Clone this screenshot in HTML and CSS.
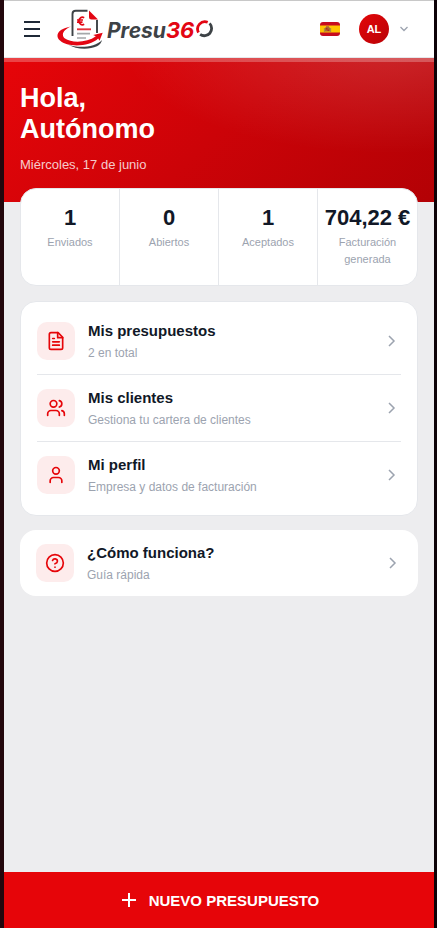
FILE: index.html
```html
<!DOCTYPE html>
<html lang="es">
<head>
  <meta charset="utf-8">
  <meta name="viewport" content="width=device-width, initial-scale=1">
  <title>Presu360</title>
  <link rel="stylesheet" href="styles.css">
</head>
<body>
  <div class="app">
    <header class="topbar">
      <button class="icon-button menu-button" type="button" aria-label="Menú">
        <svg width="18" height="18" viewBox="0 0 18 18" fill="none" stroke="currentColor" stroke-width="2"><path d="M1 2h16M1 9h16M1 16h16"/></svg>
      </button>
      <a class="logo" href="#" aria-label="Presu360">
        <svg class="logo-mark" width="48" height="42" viewBox="56 8 48 42" fill="none">
          <path d="M72.500 36V14q0-3.200 3.200-3.200H87.500M97 20v13" stroke="#3d4246" stroke-width="1.900"/>
          <path d="M89 10.500V17q0 2.500 2.500 2.500H98z" fill="#e30613"/>
          <path d="M84.200 17.700c-2.500-1.300-5.300.2-5.300 3.300s2.800 4.600 5.300 3.300M77 20h6M77 22.200h5.500" stroke="#e30613" stroke-width="1.700"/>
          <path d="M77 29.300h14" stroke="#e3333c" stroke-width="1.900"/>
          <path d="M77 33.600h13M77 38h9" stroke="#a5a7a9" stroke-width="1.600"/>
          <path d="M68 44.500c9 3.800 27 3.300 34-4.500-.5 2.500-2 5-5 6.200C89 50 76 49.500 68 44.500z" fill="#3d4246"/>
          <path d="M71 26.500C59 28.500 54 35 60 40.500c7.500 7 29 6.700 38.200-2l1.300 2.200 3.200-8-9.500 2.300 2.600 1.300C87 43 71 43 65 38.500c-4.500-3.500-1.500-9 6-12z" fill="#e30613"/>
        </svg>
        <span class="logo-text">Presu<span class="logo-red">36</span></span>
        <svg class="logo-zero" width="18" height="18" viewBox="0 0 18 18" fill="none" stroke-width="2.800">
          <path d="M2.500 12.500A7.300 7.300 0 0 1 11.700 2.300" stroke="#e30613"/>
          <path d="M13.600 3.400A7.300 7.300 0 0 1 4.100 14.400" stroke="#3d4246"/>
        </svg>
      </a>
      <div class="account">
        <button class="icon-button" type="button" aria-label="Español">
          <svg class="flag" width="20" height="14" viewBox="0 0 20 14">
            <path fill="#c60b1e" d="M0 0h20v14H0z"/>
            <path fill="#ffc400" d="M0 3.500h20v7H0z"/>
            <path fill="#a96b32" d="M5 5.500h5V9.500H5zM6 4.300h3v1.200H6z"/>
            <path fill="#b32a20" d="M6 6h1.500v1.500H6zM7.500 7.500H9V9H7.500z"/>
            <path fill="#8f7a52" d="M3.900 6h.8v4h-.8zM10.300 6h.8v4h-.8z"/>
          </svg>
        </button>
        <button class="icon-button user-button" type="button" aria-label="Cuenta de AL">
          <span class="avatar">AL</span>
          <svg width="10" height="6" viewBox="0 0 10 6" fill="none" stroke="#9ca3af" stroke-width="1.300"><path d="M1.500 1 5 4.500 8.500 1"/></svg>
        </button>
      </div>
    </header>

    <main class="content">
      <section class="hero">
        <h1>Hola,<br>Autónomo</h1>
        <p>Miércoles, 17 de junio</p>
      </section>

      <dl class="stats">
        <div class="stat"><dd>1</dd><dt>Enviados</dt></div>
        <div class="stat"><dd>0</dd><dt>Abiertos</dt></div>
        <div class="stat"><dd>1</dd><dt>Aceptados</dt></div>
        <div class="stat"><dd>704,22 €</dd><dt>Facturación generada</dt></div>
      </dl>

      <nav class="card menu">
        <a class="row" href="#">
          <span class="tile"><svg class="icon" viewBox="0 0 24 24"><path d="M14.500 2H6a2 2 0 0 0-2 2v16a2 2 0 0 0 2 2h12a2 2 0 0 0 2-2V7.500z"/><path d="M14 2v6h6M16 13H8M16 17H8M10 9H8"/></svg></span>
          <span class="row-text"><strong>Mis presupuestos</strong><small>2 en total</small></span>
          <svg class="chevron" viewBox="0 0 18 18"><path d="m6 4 5 5-5 5"/></svg>
        </a>
        <a class="row" href="#">
          <span class="tile"><svg class="icon" viewBox="0 0 24 24"><path d="M16 21v-2a4 4 0 0 0-4-4H6a4 4 0 0 0-4 4v2"/><circle cx="9" cy="7" r="4"/><path d="M22 21v-2a4 4 0 0 0-3-3.870M16 3.130a4 4 0 0 1 0 7.750"/></svg></span>
          <span class="row-text"><strong>Mis clientes</strong><small>Gestiona tu cartera de clientes</small></span>
          <svg class="chevron" viewBox="0 0 18 18"><path d="m6 4 5 5-5 5"/></svg>
        </a>
        <a class="row" href="#">
          <span class="tile"><svg class="icon" viewBox="0 0 24 24"><path d="M19 21v-2a4 4 0 0 0-4-4H9a4 4 0 0 0-4 4v2"/><circle cx="12" cy="7" r="4"/></svg></span>
          <span class="row-text"><strong>Mi perfil</strong><small>Empresa y datos de facturación</small></span>
          <svg class="chevron" viewBox="0 0 18 18"><path d="m6 4 5 5-5 5"/></svg>
        </a>
      </nav>

      <a class="card help" href="#">
        <span class="tile"><svg class="icon" viewBox="0 0 24 24"><circle cx="12" cy="12" r="10"/><path d="M9.090 9a3 3 0 0 1 5.830 1c0 2-3 3-3 3M12 17h.01"/></svg></span>
        <span class="row-text"><strong>¿Cómo funciona?</strong><small>Guía rápida</small></span>
        <svg class="chevron" viewBox="0 0 18 18"><path d="m6 4 5 5-5 5"/></svg>
      </a>
    </main>

    <button class="new-budget" type="button">
      <svg width="20" height="20" viewBox="0 0 20 20" fill="none" stroke="currentColor" stroke-width="2"><path d="M10 3v14M3 10h14"/></svg>
      NUEVO PRESUPUESTO
    </button>
  </div>
</body>
</html>
```

FILE: styles.css
```css
* {
  box-sizing: border-box;
}

body {
  margin: 0;
  background: linear-gradient(90deg, #23070d, #0d0207);
  color: #111827;
  font-family: "Liberation Sans", Arial, sans-serif;
}

h1,
p,
dl,
dd {
  margin: 0;
}

a {
  color: inherit;
  text-decoration: none;
}

button {
  font: inherit;
  border: 0;
  cursor: pointer;
}

.app {
  display: flex;
  flex-direction: column;
  min-height: 100vh;
  margin: 0 3px 0 4px;
  border-top: 1px solid #c8c8c8;
  background: #ededef;
}

.topbar {
  display: flex;
  align-items: center;
  height: 57px;
  padding: 0 25px 0 19px;
  border-bottom: 1px solid #e5e7eb;
  background: #fff;
}

.icon-button {
  display: flex;
  align-items: center;
  padding: 0;
  background: none;
}

.menu-button {
  color: #1f2937;
}

.logo {
  display: flex;
  align-items: center;
  margin-left: 15px;
}

.logo-text {
  margin: 0 2px 0 3px;
  padding-top: 2px;
  color: #3d4246;
  font: italic 700 21px/28px Inter, sans-serif;
}

.logo-red {
  color: #e30613;
  font-size: 22px;
}

.account {
  display: flex;
  align-items: center;
  gap: 19px;
  margin-left: auto;
}

.flag {
  border-radius: 3px;
}

.user-button {
  gap: 10px;
}

.avatar {
  display: grid;
  place-items: center;
  width: 30px;
  height: 30px;
  border-radius: 50%;
  background: linear-gradient(135deg, #e30609, #b90206);
  color: #fff;
  font-size: 11px;
  font-weight: 700;
}

.content {
  flex: 1;
}

.hero {
  padding: 21px 16px 27px;
  border-top: 4px solid rgba(255, 255, 255, 0.25);
  background:
    radial-gradient(ellipse 270px 110px at 90% -10%, rgba(255, 255, 255, 0.15), transparent) border-box,
    linear-gradient(135deg, #e60509, #cc0308 50%, #b30105) border-box;
  color: #fff;
}

.hero h1 {
  font-size: 27px;
  line-height: 31px;
}

.hero p {
  margin-top: 10px;
  color: rgba(255, 255, 255, 0.8);
  font-size: 13px;
  line-height: 20px;
}

.stats {
  display: grid;
  grid-template-columns: repeat(4, 1fr);
  position: relative;
  margin: -14px 16px 15px;
  overflow: hidden;
  border: 1px solid #e5e7eb;
  border-radius: 16px;
  background: #fff;
  text-align: center;
}

.stat {
  display: flex;
  flex-direction: column;
  gap: 4px;
  min-width: 0;
  padding: 16px 4px 17px;
  border-right: 1px solid #e5e7eb;
}

.stat:last-child {
  border-right: 0;
}

.stat dd {
  font-size: 22px;
  font-weight: 700;
  line-height: 25px;
  white-space: nowrap;
}

.stat dt {
  color: #9ca3af;
  font-size: 11px;
  line-height: 17px;
}

.card {
  margin: 0 16px 14px;
  border-radius: 16px;
  background: #fff;
}

.menu {
  padding: 6px 16px;
  border: 1px solid #e5e7eb;
}

.row,
.help {
  display: flex;
  align-items: center;
  gap: 13px;
}

.row {
  padding: 12px 0;
  border-bottom: 1px solid #e5e7eb;
}

.row:last-child {
  border-color: transparent;
}

.help {
  padding: 12px 16px;
}

.tile {
  display: grid;
  place-items: center;
  width: 38px;
  height: 38px;
  border-radius: 10px;
  background: #fdecec;
}

.icon {
  width: 20px;
  height: 20px;
  fill: none;
  stroke: #e60509;
  stroke-width: 2;
  stroke-linecap: round;
  stroke-linejoin: round;
}

.row-text {
  display: flex;
  flex: 1;
  flex-direction: column;
  gap: 2px;
}

.row-text strong {
  font-size: 15px;
  line-height: 22px;
}

.row-text small {
  color: #9ca3af;
  font-size: 12px;
  line-height: 18px;
}

.chevron {
  width: 18px;
  height: 18px;
  fill: none;
  stroke: #9ca3af;
  stroke-width: 1.5;
}

.new-budget {
  display: flex;
  align-items: center;
  justify-content: center;
  gap: 10px;
  height: 56px;
  background: #e60509;
  color: #fff;
  font-size: 15px;
  font-weight: 700;
}
```
